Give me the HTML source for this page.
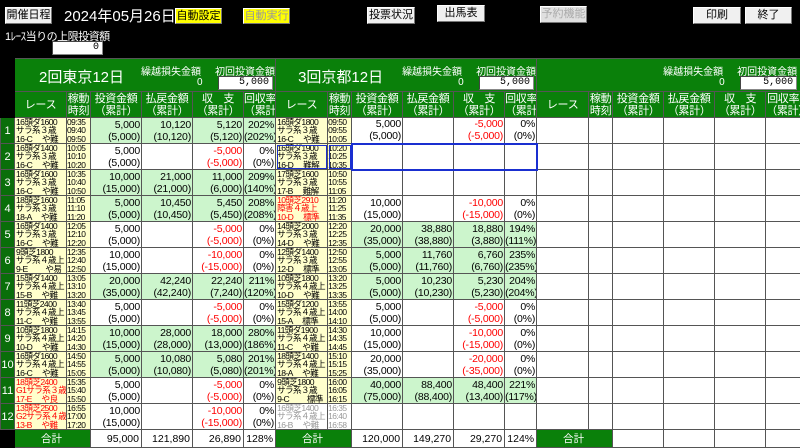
<!DOCTYPE html>
<html><head><meta charset="utf-8">
<style>
*{margin:0;padding:0;box-sizing:border-box}
body{width:800px;height:447px;background:#000;overflow:hidden;font-family:"Liberation Sans","Noto Sans CJK JP",sans-serif;position:relative;color:#000}
.btn{position:absolute;height:17px;background:#f0f0f0;border:1px solid #fff;border-right-color:#777;border-bottom-color:#777;font-size:11px;text-align:center;line-height:15px}
.y{background:#ffff00}
table{position:absolute;left:0;top:58px;border-collapse:collapse;table-layout:fixed;width:800px}
td{border:1px solid #555;padding:0;overflow:hidden;white-space:nowrap}
.blk{background:#000;border-color:#000}
.hd td.g{background:#0a800a;color:#fff;text-align:center;font-size:11px;line-height:12px;letter-spacing:-0.3px}
.g{background:#0a800a}
.rn{background:#0a6e0a;color:#fff;text-align:center;font-size:11px;border-color:#555}
.rc{background:#ffffcc;font-size:8.6px;line-height:8.3px;padding-left:1px;letter-spacing:-0.6px}
.tm{background:#ffffcc;font-size:8.4px;line-height:8.3px;padding-left:0;letter-spacing:-0.5px;font-family:"Liberation Sans Narrow","Liberation Sans",sans-serif}
.n{font-size:10.5px;line-height:12px;text-align:right;padding-right:1px;letter-spacing:-0.2px}
.lg{background:#ccf5cc}
.w{background:#fff}
.r{color:#f00}
.gr{color:#999}
.ti{position:relative;height:32px;color:#fff}
.inp{position:absolute;background:#fff;border:1px solid #888;border-top-color:#444;border-left-color:#444;color:#000;font-size:10px;text-align:right;padding-right:3px;line-height:12px;font-family:"Liberation Mono",monospace}
.tot td{height:18px;font-size:10.5px;text-align:right;padding-right:2px;background:#fff}
.tot td.g{background:#0a800a;color:#fff;text-align:center}
.sel td.s{border-top:2px solid #1a2fd0;border-bottom:2px solid #1a2fd0}
</style></head><body>
<div class="btn" style="left:5px;top:7px;width:47px">開催日程</div>
<div style="position:absolute;left:64px;top:5px;color:#fff;font-size:15px">2024年05月26日</div>
<div class="btn y" style="left:175px;top:8px;width:47px;height:16px">自動設定</div>
<div class="btn y" style="left:243px;top:8px;width:47px;height:16px;color:#999">自動実行</div>
<div class="btn" style="left:367px;top:7px;width:48px">投票状況</div>
<div class="btn" style="left:437px;top:5px;width:48px">出馬表</div>
<div class="btn" style="left:540px;top:6px;width:47px;color:#aaa;background:#e0e0e0">予約機能</div>
<div class="btn" style="left:693px;top:7px;width:48px">印刷</div>
<div class="btn" style="left:745px;top:7px;width:47px">終了</div>
<div style="position:absolute;left:5px;top:28px;color:#fff;font-size:11px;letter-spacing:-0.5px">1ﾚｰｽ当りの上限投資額</div>
<div class="inp" style="left:52px;top:41px;width:51px;height:14px">0</div>

<table>
<colgroup><col style="width:14px">
<col style="width:52px"><col style="width:24px"><col style="width:51px"><col style="width:51px"><col style="width:51px"><col style="width:32px">
<col style="width:52px"><col style="width:24px"><col style="width:51px"><col style="width:51px"><col style="width:51px"><col style="width:32px">
<col style="width:52px"><col style="width:24px"><col style="width:51px"><col style="width:51px"><col style="width:51px"><col style="width:35px">
</colgroup>
<tr style="height:33px"><td class="blk" rowspan="2"></td>
<td class="g" colspan="6"><div class="ti"><span style="position:absolute;left:24px;top:7px;font-size:15px">2回東京12日</span><span style="position:absolute;left:126px;top:4px;font-size:10px">繰越損失金額</span><span style="position:absolute;left:182px;top:18px;font-size:10px">0</span><span style="position:absolute;left:200px;top:4px;font-size:10px">初回投資金額</span><div class="inp" style="left:203px;top:17px;width:55px;height:14px">5,000</div></div></td>
<td class="g" colspan="6"><div class="ti"><span style="position:absolute;left:22px;top:7px;font-size:15px">3回京都12日</span><span style="position:absolute;left:126px;top:4px;font-size:10px">繰越損失金額</span><span style="position:absolute;left:182px;top:18px;font-size:10px">0</span><span style="position:absolute;left:200px;top:4px;font-size:10px">初回投資金額</span><div class="inp" style="left:203px;top:17px;width:55px;height:14px">5,000</div></div></td>
<td class="g" colspan="6"><div class="ti"><span style="position:absolute;left:126px;top:4px;font-size:10px">繰越損失金額</span><span style="position:absolute;left:182px;top:18px;font-size:10px">0</span><span style="position:absolute;left:200px;top:4px;font-size:10px">初回投資金額</span><div class="inp" style="left:203px;top:17px;width:57px;height:14px">5,000</div></div></td>
</tr>
<tr class="hd" style="height:26px">
<td class="g">レース</td><td class="g">稼動<br>時刻</td><td class="g">投資金額<br>（累計）</td><td class="g">払戻金額<br>（累計）</td><td class="g">収　支<br>（累計）</td><td class="g">回収率<br>（累計）</td>
<td class="g">レース</td><td class="g">稼動<br>時刻</td><td class="g">投資金額<br>（累計）</td><td class="g">払戻金額<br>（累計）</td><td class="g">収　支<br>（累計）</td><td class="g">回収率<br>（累計）</td>
<td class="g">レース</td><td class="g">稼動<br>時刻</td><td class="g">投資金額<br>（累計）</td><td class="g">払戻金額<br>（累計）</td><td class="g">収　支<br>（累計）</td><td class="g">回収率<br>（累計）</td>
</tr>
<tr style="height:26px"><td class="rn">1</td>
<td class="rc">16頭ダ1600<br>サラ系３歳<br>16-C　 や難</td><td class="tm">09:35<br>09:40<br>09:50</td>
<td class="n lg">5,000<br>(5,000)</td><td class="n lg">10,120<br>(10,120)</td><td class="n lg">5,120<br>(5,120)</td><td class="n lg">202%<br>(202%)</td>
<td class="rc">16頭ダ1800<br>サラ系３歳<br>16-C　 や難</td><td class="tm">09:50<br>09:55<br>10:05</td>
<td class="n w">5,000<br>(5,000)</td><td class="n w"></td><td class="n w r">-5,000<br>(-5,000)</td><td class="n w">0%<br>(0%)</td>
<td class="w"></td><td class="w"></td><td class="w"></td><td class="w"></td><td class="w"></td><td class="w"></td></tr>

<tr style="height:26px" class="sel"><td class="rn">2</td>
<td class="rc">16頭ダ1400<br>サラ系３歳<br>16-C　 や難</td><td class="tm">10:05<br>10:10<br>10:20</td>
<td class="n w">5,000<br>(5,000)</td><td class="n w"></td><td class="n w r">-5,000<br>(-5,000)</td><td class="n w">0%<br>(0%)</td>
<td class="rc" style="outline:1px solid #1a2fd0;outline-offset:-2px">16頭ダ1900<br>サラ系３歳<br>16-D　 難解</td><td class="tm" style="outline:1px solid #1a2fd0;outline-offset:-2px">10:20<br>10:25<br>10:35</td>
<td class="w s" style="border-left:2px solid #1a2fd0"></td><td class="w s"></td><td class="w s"></td><td class="w s" style="border-right:2px solid #1a2fd0"></td>
<td class="w"></td><td class="w"></td><td class="w"></td><td class="w"></td><td class="w"></td><td class="w"></td></tr>

<tr style="height:26px"><td class="rn">3</td>
<td class="rc">16頭ダ1600<br>サラ系３歳<br>16-C　 や難</td><td class="tm">10:35<br>10:40<br>10:50</td>
<td class="n lg">10,000<br>(15,000)</td><td class="n lg">21,000<br>(21,000)</td><td class="n lg">11,000<br>(6,000)</td><td class="n lg">209%<br>(140%)</td>
<td class="rc">17頭芝1600<br>サラ系３歳<br>17-B　 難解</td><td class="tm">10:50<br>10:55<br>11:05</td>
<td class="w"></td><td class="w"></td><td class="w"></td><td class="w"></td>
<td class="w"></td><td class="w"></td><td class="w"></td><td class="w"></td><td class="w"></td><td class="w"></td></tr>

<tr style="height:26px"><td class="rn">4</td>
<td class="rc">18頭芝1600<br>サラ系３歳<br>18-A　 や難</td><td class="tm">11:05<br>11:10<br>11:20</td>
<td class="n lg">5,000<br>(5,000)</td><td class="n lg">10,450<br>(10,450)</td><td class="n lg">5,450<br>(5,450)</td><td class="n lg">208%<br>(208%)</td>
<td class="rc r">10頭芝2910<br>障害４歳上<br>10-D　 標準</td><td class="tm">11:20<br>11:25<br>11:35</td>
<td class="n w">10,000<br>(15,000)</td><td class="n w"></td><td class="n w r">-10,000<br>(-15,000)</td><td class="n w">0%<br>(0%)</td>
<td class="w"></td><td class="w"></td><td class="w"></td><td class="w"></td><td class="w"></td><td class="w"></td></tr>

<tr style="height:26px"><td class="rn">5</td>
<td class="rc">16頭ダ1400<br>サラ系３歳<br>16-C　 や難</td><td class="tm">12:05<br>12:10<br>12:20</td>
<td class="n w">5,000<br>(5,000)</td><td class="n w"></td><td class="n w r">-5,000<br>(-5,000)</td><td class="n w">0%<br>(0%)</td>
<td class="rc">14頭芝2000<br>サラ系３歳<br>14-D　 や難</td><td class="tm">12:20<br>12:25<br>12:35</td>
<td class="n lg">20,000<br>(35,000)</td><td class="n lg">38,880<br>(38,880)</td><td class="n lg">18,880<br>(3,880)</td><td class="n lg">194%<br>(111%)</td>
<td class="w"></td><td class="w"></td><td class="w"></td><td class="w"></td><td class="w"></td><td class="w"></td></tr>

<tr style="height:26px"><td class="rn">6</td>
<td class="rc">9頭芝1800<br>サラ系４歳上<br>9-E　　 や易</td><td class="tm">12:35<br>12:40<br>12:50</td>
<td class="n w">10,000<br>(15,000)</td><td class="n w"></td><td class="n w r">-10,000<br>(-15,000)</td><td class="n w">0%<br>(0%)</td>
<td class="rc">12頭ダ1400<br>サラ系３歳<br>12-D　 標準</td><td class="tm">12:50<br>12:55<br>13:05</td>
<td class="n lg">5,000<br>(5,000)</td><td class="n lg">11,760<br>(11,760)</td><td class="n lg">6,760<br>(6,760)</td><td class="n lg">235%<br>(235%)</td>
<td class="w"></td><td class="w"></td><td class="w"></td><td class="w"></td><td class="w"></td><td class="w"></td></tr>

<tr style="height:26px"><td class="rn">7</td>
<td class="rc">15頭ダ1400<br>サラ系４歳上<br>15-B　 や難</td><td class="tm">13:05<br>13:10<br>13:20</td>
<td class="n lg">20,000<br>(35,000)</td><td class="n lg">42,240<br>(42,240)</td><td class="n lg">22,240<br>(7,240)</td><td class="n lg">211%<br>(120%)</td>
<td class="rc">10頭芝1800<br>サラ系４歳上<br>10-D　 や難</td><td class="tm">13:20<br>13:25<br>13:35</td>
<td class="n lg">5,000<br>(5,000)</td><td class="n lg">10,230<br>(10,230)</td><td class="n lg">5,230<br>(5,230)</td><td class="n lg">204%<br>(204%)</td>
<td class="w"></td><td class="w"></td><td class="w"></td><td class="w"></td><td class="w"></td><td class="w"></td></tr>

<tr style="height:26px"><td class="rn">8</td>
<td class="rc">11頭芝2400<br>サラ系４歳上<br>11-C　 や難</td><td class="tm">13:40<br>13:45<br>13:55</td>
<td class="n w">5,000<br>(5,000)</td><td class="n w"></td><td class="n w r">-5,000<br>(-5,000)</td><td class="n w">0%<br>(0%)</td>
<td class="rc">15頭ダ1200<br>サラ系４歳上<br>15-A　 標準</td><td class="tm">13:55<br>14:00<br>14:10</td>
<td class="n w">5,000<br>(5,000)</td><td class="n w"></td><td class="n w r">-5,000<br>(-5,000)</td><td class="n w">0%<br>(0%)</td>
<td class="w"></td><td class="w"></td><td class="w"></td><td class="w"></td><td class="w"></td><td class="w"></td></tr>

<tr style="height:26px"><td class="rn">9</td>
<td class="rc">10頭芝1800<br>サラ系４歳上<br>10-D　 や難</td><td class="tm">14:15<br>14:20<br>14:30</td>
<td class="n lg">10,000<br>(15,000)</td><td class="n lg">28,000<br>(28,000)</td><td class="n lg">18,000<br>(13,000)</td><td class="n lg">280%<br>(186%)</td>
<td class="rc">11頭ダ1900<br>サラ系４歳上<br>11-C　 や難</td><td class="tm">14:30<br>14:35<br>14:45</td>
<td class="n w">10,000<br>(15,000)</td><td class="n w"></td><td class="n w r">-10,000<br>(-15,000)</td><td class="n w">0%<br>(0%)</td>
<td class="w"></td><td class="w"></td><td class="w"></td><td class="w"></td><td class="w"></td><td class="w"></td></tr>

<tr style="height:26px"><td class="rn">10</td>
<td class="rc">16頭ダ1600<br>サラ系４歳上<br>16-C　 や難</td><td class="tm">14:50<br>14:55<br>15:05</td>
<td class="n lg">5,000<br>(5,000)</td><td class="n lg">10,080<br>(10,080)</td><td class="n lg">5,080<br>(5,080)</td><td class="n lg">201%<br>(201%)</td>
<td class="rc">18頭芝1400<br>サラ系４歳上<br>18-A　 や難</td><td class="tm">15:10<br>15:15<br>15:25</td>
<td class="n w">20,000<br>(35,000)</td><td class="n w"></td><td class="n w r">-20,000<br>(-35,000)</td><td class="n w">0%<br>(0%)</td>
<td class="w"></td><td class="w"></td><td class="w"></td><td class="w"></td><td class="w"></td><td class="w"></td></tr>

<tr style="height:26px"><td class="rn">11</td>
<td class="rc r">18頭芝2400<br>G1サラ系３歳<br>17-E　 や良</td><td class="tm">15:35<br>15:40<br>15:50</td>
<td class="n w">5,000<br>(5,000)</td><td class="n w"></td><td class="n w r">-5,000<br>(-5,000)</td><td class="n w">0%<br>(0%)</td>
<td class="rc">9頭芝1800<br>サラ系３歳<br>9-C　　 標準</td><td class="tm">16:00<br>16:05<br>16:15</td>
<td class="n lg">40,000<br>(75,000)</td><td class="n lg">88,400<br>(88,400)</td><td class="n lg">48,400<br>(13,400)</td><td class="n lg">221%<br>(117%)</td>
<td class="w"></td><td class="w"></td><td class="w"></td><td class="w"></td><td class="w"></td><td class="w"></td></tr>

<tr style="height:26px"><td class="rn">12</td>
<td class="rc r">13頭芝2500<br>G2サラ系４歳<br>13-B　 や難</td><td class="tm">16:55<br>17:00<br>17:20</td>
<td class="n w">10,000<br>(15,000)</td><td class="n w"></td><td class="n w r">-10,000<br>(-15,000)</td><td class="n w">0%<br>(0%)</td>
<td class="rc gr" style="background:#fff">16頭芝1400<br>サラ系４歳上<br>16-B　 や難</td><td class="tm gr" style="background:#fff">16:35<br>16:40<br>16:58</td>
<td class="w"></td><td class="w"></td><td class="w"></td><td class="w"></td>
<td class="w"></td><td class="w"></td><td class="w"></td><td class="w"></td><td class="w"></td><td class="w"></td></tr>

<tr class="tot"><td class="blk" style="background:#000"></td>
<td class="g" colspan="2">合計</td><td>95,000</td><td>121,890</td><td>26,890</td><td>128%</td>
<td class="g" colspan="2">合計</td><td>120,000</td><td>149,270</td><td>29,270</td><td>124%</td>
<td class="g" colspan="2">合計</td><td></td><td></td><td></td><td></td>
</tr>
</table>
</body></html>
